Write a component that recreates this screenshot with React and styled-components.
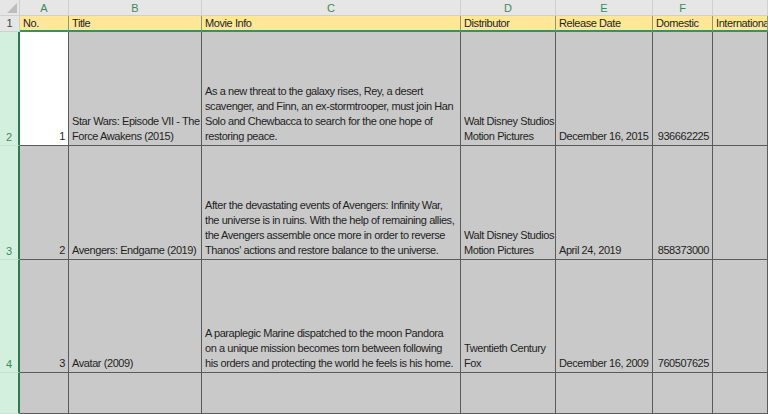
import { Fragment } from 'react';
import styled, { createGlobalStyle } from 'styled-components';

const GlobalStyle = createGlobalStyle`
  html, body {
    margin: 0;
    padding: 0;
    width: 768px;
    height: 414px;
    overflow: hidden;
    background: #c9c9c9;
  }
  body {
    font-family: "Liberation Sans", Arial, sans-serif;
  }
`;

const Sheet = styled.div`
  display: grid;
  grid-template-columns: 20px 49px 133px 259px 95px 97px 60px 1fr;
  grid-template-rows: 16px 16px 114px 114px 113px 1fr;
  width: 768px;
  height: 414px;
  overflow: hidden;
  font-size: 11px;
  letter-spacing: -0.42px;
  color: #1f1f1f;
`;

const Corner = styled.div`
  position: relative;
  background: #e6e6e6;
  border-right: 1px solid #d0d0d0;
  border-bottom: 1px solid #d0d0d0;

  &::after {
    content: '';
    position: absolute;
    right: 2px;
    bottom: 2px;
    width: 0;
    height: 0;
    border-left: 10px solid transparent;
    border-bottom: 10px solid #bdbdbd;
  }
`;

const ColHead = styled.div`
  display: flex;
  align-items: center;
  justify-content: center;
  background: #e6e6e6;
  color: #3c8a5c;
  font-size: 11px;
  letter-spacing: 0;
  border-right: 1px solid #cfcfcf;
  border-bottom: 1px solid #cfcfcf;
`;

const RowHead = styled.div`
  display: flex;
  align-items: flex-end;
  justify-content: center;
  padding-bottom: 2px;
  box-sizing: border-box;
  font-size: 11px;
  letter-spacing: 0;
  background: ${(p) => (p.$active ? '#d3f0df' : '#e6e6e6')};
  color: ${(p) => (p.$active ? '#3c8a5c' : '#444')};
  border-right: ${(p) => (p.$active ? '2px solid #2f7a4c' : '1px solid #cfcfcf')};
  border-bottom: 1px solid ${(p) => (p.$active ? '#c4e2d0' : '#cfcfcf')};
`;

const HeadCell = styled.div`
  display: flex;
  align-items: flex-end;
  padding: 0 3px 1px;
  background: #ffe699;
  border-right: 1px solid #8a9a6a;
  border-bottom: 2px solid #3f8f5a;
  box-sizing: border-box;
  white-space: nowrap;
  overflow: hidden;
`;

const Cell = styled.div`
  display: flex;
  align-items: flex-end;
  justify-content: ${(p) => (p.$right ? 'flex-end' : 'flex-start')};
  padding: 0 3px 1px;
  box-sizing: border-box;
  background: ${(p) => (p.$selected ? '#ffffff' : '#c9c9c9')};
  border-right: 1px solid #5a5a5a;
  border-bottom: 1px solid #5a5a5a;
  line-height: 15px;
  white-space: pre;
  overflow: hidden;
`;

const columns = ['A', 'B', 'C', 'D', 'E', 'F', ''];
const headers = ['No.', 'Title', 'Movie Info', 'Distributor', 'Release Date', 'Domestic', 'International'];

const movies = [
  {
    no: 1,
    title: 'Star Wars: Episode VII - The\nForce Awakens (2015)',
    info: 'As a new threat to the galaxy rises, Rey, a desert\nscavenger, and Finn, an ex-stormtrooper, must join Han\nSolo and Chewbacca to search for the one hope of\nrestoring peace.',
    distributor: 'Walt Disney Studios\nMotion Pictures',
    date: 'December 16, 2015',
    domestic: '936662225',
  },
  {
    no: 2,
    title: 'Avengers: Endgame (2019)',
    info: "After the devastating events of Avengers: Infinity War,\nthe universe is in ruins. With the help of remaining allies,\nthe Avengers assemble once more in order to reverse\nThanos' actions and restore balance to the universe.",
    distributor: 'Walt Disney Studios\nMotion Pictures',
    date: 'April 24, 2019',
    domestic: '858373000',
  },
  {
    no: 3,
    title: 'Avatar (2009)',
    info: 'A paraplegic Marine dispatched to the moon Pandora\non a unique mission becomes torn between following\nhis orders and protecting the world he feels is his home.',
    distributor: 'Twentieth Century\nFox',
    date: 'December 16, 2009',
    domestic: '760507625',
  },
];

const App = () => {
  return (
    <>
      <GlobalStyle />
      <Sheet>
        <Corner />
        {columns.map((c, i) => (
          <ColHead key={i}>{c}</ColHead>
        ))}

        <RowHead>1</RowHead>
        {headers.map((h) => (
          <HeadCell key={h}>{h}</HeadCell>
        ))}

        {movies.map((m, i) => (
          <Fragment key={m.no}>
            <RowHead $active>{m.no + 1}</RowHead>
            <Cell $right $selected={i === 0}>{m.no}</Cell>
            <Cell>{m.title}</Cell>
            <Cell>{m.info}</Cell>
            <Cell>{m.distributor}</Cell>
            <Cell>{m.date}</Cell>
            <Cell $right>{m.domestic}</Cell>
            <Cell />
          </Fragment>
        ))}

        <RowHead $active />
        {[0, 1, 2, 3, 4, 5, 6].map((k) => (
          <Cell key={k} />
        ))}
      </Sheet>
    </>
  );
};

export default App;
